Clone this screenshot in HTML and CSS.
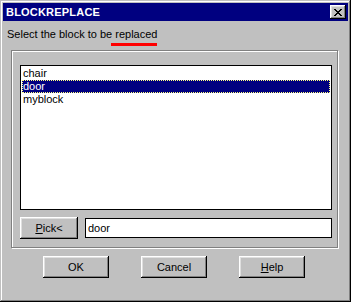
FILE: index.html
```html
<!DOCTYPE html>
<html lang="en">
<head>
<meta charset="UTF-8">
<meta name="viewport" content="width=device-width, initial-scale=1.0">
<title>BLOCKREPLACE</title>
<link rel="stylesheet" href="styles.css">
</head>
<body>
<div class="window">
  <div class="titlebar">
    <span class="title">BLOCKREPLACE</span>
    <button class="close-btn" aria-label="Close">
      <svg width="8" height="7" viewBox="0 0 8 7" shape-rendering="crispEdges">
        <path d="M0 0h2v1h-2zM6 0h2v1h-2zM1 1h2v1h-2zM5 1h2v1h-2zM2 2h4v1h-4zM3 3h2v1h-2zM2 4h4v1h-4zM1 5h2v1h-2zM5 5h2v1h-2zM0 6h2v1h-2zM6 6h2v1h-2z" fill="#000"/>
      </svg>
    </button>
  </div>

  <div class="prompt">Select the block to be <span class="marked">replaced</span></div>

  <div class="groupbox">
    <ul class="listbox">
      <li class="item">chair</li>
      <li class="item selected">door</li>
      <li class="item">myblock</li>
    </ul>
    <div class="pick-row">
      <button class="btn pick-btn"><u>P</u>ick&lt;</button>
      <div class="field">door</div>
    </div>
  </div>

  <div class="actions">
    <button class="btn">OK</button>
    <button class="btn">Cancel</button>
    <button class="btn"><u>H</u>elp</button>
  </div>
</div>
</body>
</html>
```

FILE: styles.css
```css
body {
    margin: 0;
    background-color: #c0c0c0;
    font-family: "Liberation Sans", Arial, sans-serif;
    font-size: 11px;
    color: #000;
}

.window {
    width: 351px;
    height: 302px;
    box-sizing: border-box;
    padding: 3px;
    background-color: #c0c0c0;
    box-shadow: inset -1px -1px #000, inset 1px 1px #c0c0c0,
                inset -2px -2px #808080, inset 2px 2px #fff;
}

.titlebar {
    height: 18px;
    background-color: #000080;
    display: flex;
    align-items: center;
    justify-content: space-between;
    padding: 0 2px 0 3px;
}

.title {
    color: #fff;
    font-weight: bold;
    font-size: 11px;
    letter-spacing: 0.2px;
}

.close-btn {
    width: 16px;
    height: 14px;
    padding: 0;
    border: none;
    background-color: #c0c0c0;
    display: flex;
    align-items: center;
    justify-content: center;
    box-shadow: inset -1px -1px #000, inset 1px 1px #fff,
                inset -2px -2px #808080, inset 2px 2px #dfdfdf;
}

.prompt {
    margin: 7px 0 0 4px;
    line-height: 13px;
}

.marked {
    position: relative;
}

/* red annotation bar under the word */
.marked::after {
    content: "";
    position: absolute;
    left: -4px;
    bottom: -6px;
    width: 46px;
    height: 3px;
    background-color: #f00;
}

.groupbox {
    margin: 9px 0 0 8px;
    width: 327px;
    height: 198px;
    box-sizing: border-box;
    border: 1px solid #808080;
    box-shadow: inset 1px 1px #fff, 1px 1px #fff;
    padding: 14px 5px 0 8px;
}

.listbox {
    list-style: none;
    margin: 0;
    padding: 1px;
    height: 145px;
    box-sizing: border-box;
    background-color: #fff;
    border: 1px solid #000;
}

.item {
    height: 13px;
    line-height: 13px;
    padding-left: 1px;
}

.item.selected {
    background-color: #000080;
    color: #fff;
    outline: 1px dotted #ffff80;
    outline-offset: -1px;
}

.pick-row {
    display: flex;
    align-items: center;
    margin-top: 7px;
}

.btn {
    font-family: "Liberation Sans", Arial, sans-serif;
    font-size: 11px;
    color: #000;
    width: 66px;
    height: 22px;
    padding: 0;
    border: none;
    background-color: #c0c0c0;
    box-shadow: inset -1px -1px #000, inset 1px 1px #fff,
                inset -2px -2px #808080, inset 2px 2px #dfdfdf;
}

.pick-btn {
    width: 58px;
}

.field {
    margin-left: 7px;
    flex: 1;
    height: 20px;
    box-sizing: border-box;
    padding-left: 2px;
    background-color: #fff;
    border: 1px solid #000;
    line-height: 18px;
}

.actions {
    display: flex;
    gap: 32px;
    margin: 8px 0 0 40px;
}
```
